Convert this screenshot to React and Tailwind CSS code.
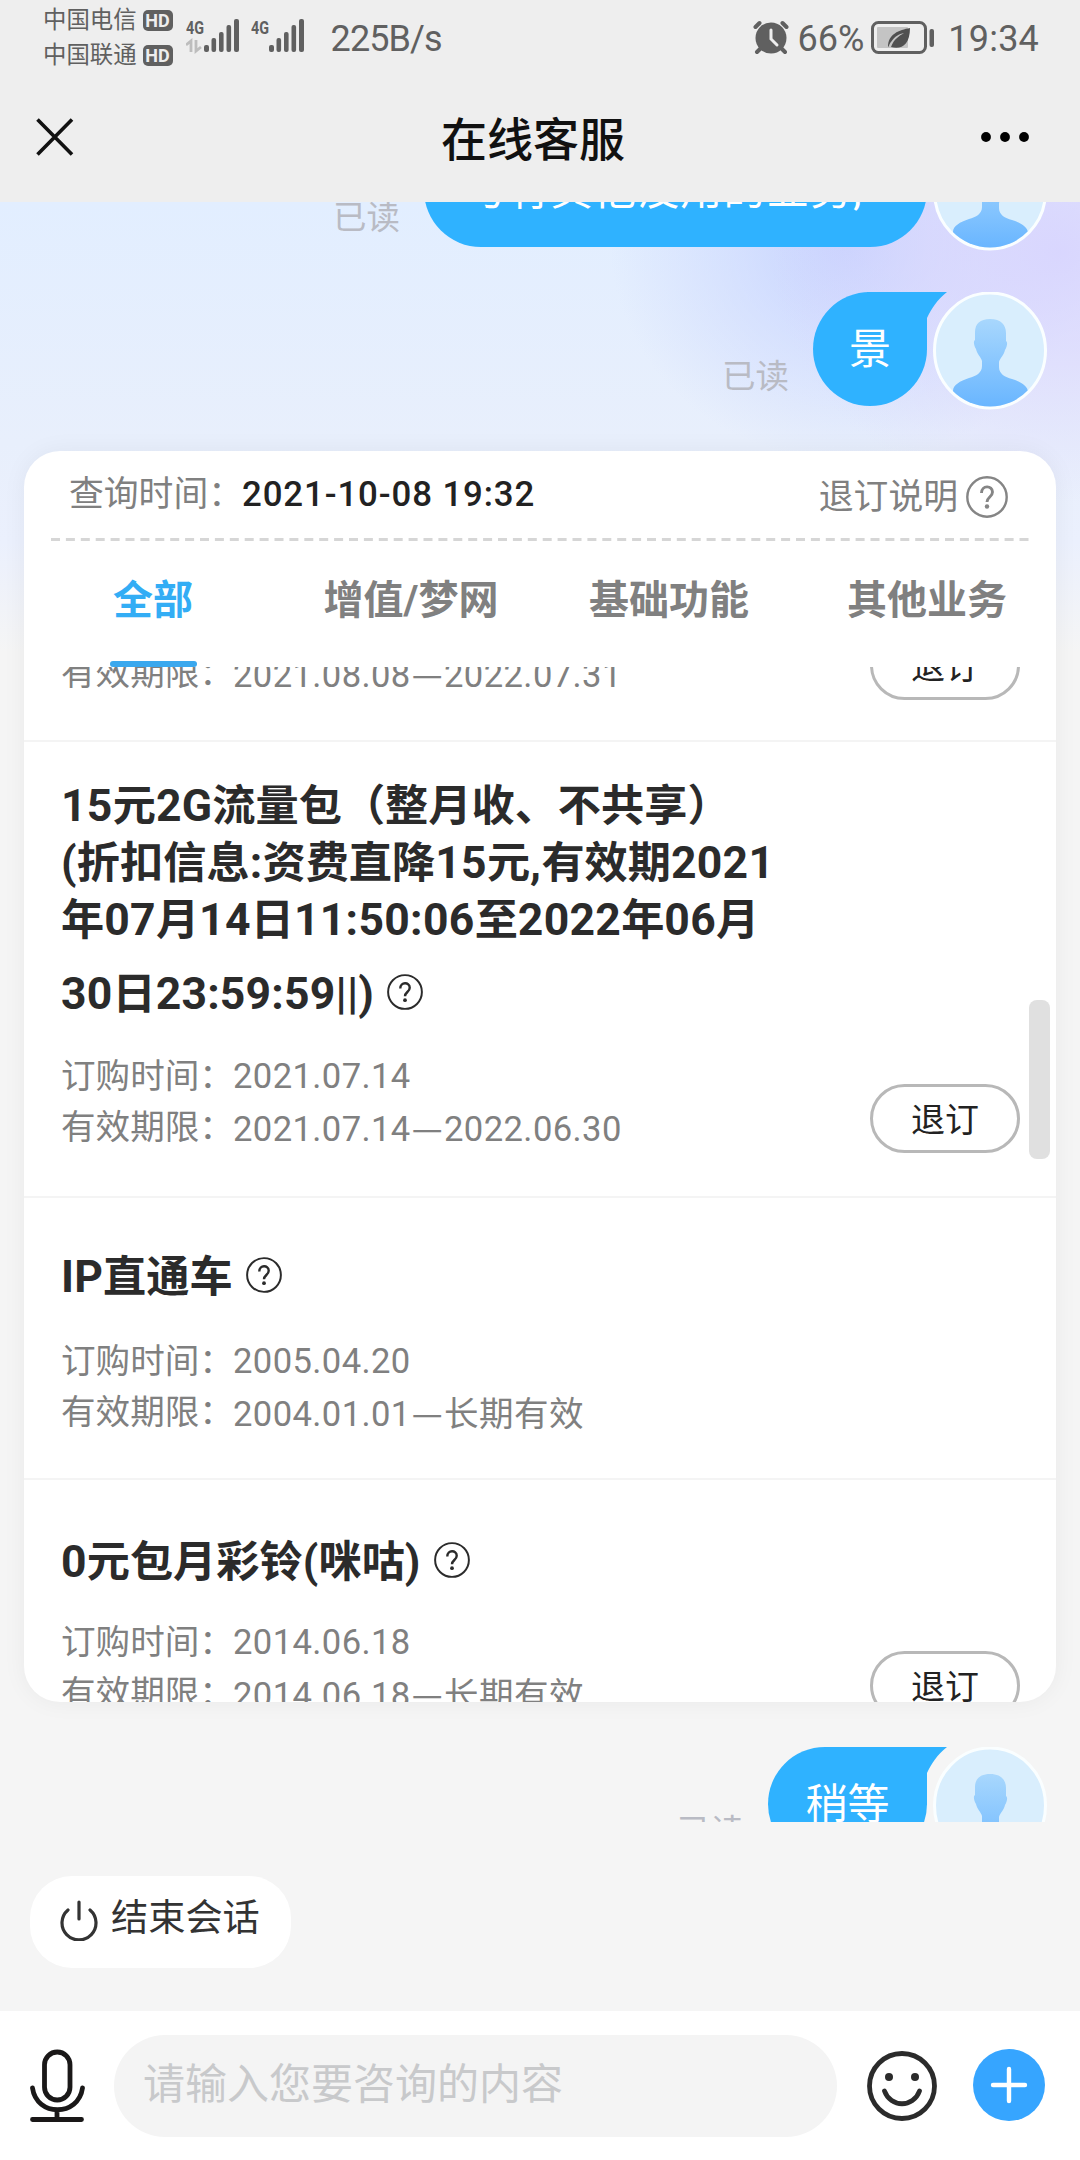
import React, { Fragment } from 'react'

const services = [
  {
    title: [],
    orderTime: null,
    period: '2021.08.08—2022.07.31',
    canCancel: true,
    box: 'h-[94px] pt-0',
    titleGap: '',
    button: 'mt-[-17px]',
  },
  {
    title: ['15元2G流量包（整月收、不共享）', '(折扣信息:资费直降15元,有效期2021', '年07月14日11:50:06至2022年06月'],
    lastLine: '30日23:59:59||)',
    orderTime: '2021.07.14',
    period: '2021.07.14—2022.06.30',
    canCancel: true,
    box: 'h-[456px] pt-[36px]',
    lastLineBox: 'h-[90px]',
    titleGap: 'mt-[12px]',
    button: 'mt-[306px]',
  },
  {
    title: [],
    lastLine: 'IP直通车',
    orderTime: '2005.04.20',
    period: '2004.01.01—长期有效',
    canCancel: false,
    box: 'h-[282px] pt-[50px]',
    lastLineBox: 'h-[58px]',
    titleGap: 'mt-[30px]',
  },
  {
    title: [],
    lastLine: '0元包月彩铃(咪咕)',
    orderTime: '2014.06.18',
    period: '2014.06.18—长期有效',
    canCancel: true,
    box: 'h-[300px] pt-[53px]',
    lastLineBox: 'h-[58px]',
    titleGap: 'mt-[26px]',
    button: 'mt-[118px]',
  },
]

const tabs = ['全部', '增值/梦网', '基础功能', '其他业务']

// Latin runs are set slightly larger and wider than the Chinese around them
function Mixed({ text, className }) {
  return text.split(/([\x21-\x7e]+)/).map((part, i) =>
    i % 2 ? (
      <span key={i} className={className}>
        {part}
      </span>
    ) : (
      <Fragment key={i}>{part}</Fragment>
    )
  )
}

function Signal({ data }) {
  return (
    <svg width="54" height="36" viewBox="0 0 54 36" fill="#606060">
      <text x="0" y="16" fontSize="19" fontWeight="700" textLength="18" lengthAdjust="spacingAndGlyphs" fontFamily="Roboto, sans-serif">
        4G
      </text>
      {data && (
        <g stroke="#bdbdbd" strokeWidth="2.8" fill="none">
          <path d="M0 27l5-4v11" />
          <path d="M10 22v11l5-4" />
        </g>
      )}
      <rect x="18" y="27" width="5" height="7" rx="2" />
      <rect x="25.5" y="20" width="4.6" height="14" rx="2" />
      <rect x="33" y="14" width="4.6" height="20" rx="2" />
      <rect x="40.5" y="7" width="4.6" height="27" rx="2" />
      <rect x="48" y="1" width="5" height="33" rx="2" />
    </svg>
  )
}

function Carrier({ name }) {
  return (
    <div className="flex h-[35px] items-center">
      <span className="text-[23.400px] leading-none text-[#606060]">{name}</span>
      <span className="ml-[6px] flex h-[21px] w-[30px] items-center justify-center rounded-[5px] bg-[#606060] text-[18px] leading-none font-bold text-[#eee]">
        HD
      </span>
    </div>
  )
}

function StatusBar() {
  return (
    <div className="flex h-[73px] items-start text-[#606060]">
      <div className="ml-[43px] pt-[3px]">
        <Carrier name="中国电信" />
        <Carrier name="中国联通" />
      </div>
      <div className="ml-[13px] flex gap-[11px] pt-[18px]">
        <Signal data />
        <Signal />
      </div>
      <span className="ml-[26px] pt-[17px] text-[36px] leading-[44px] tracking-[-0.9px]">225B/s</span>
      <div className="mr-[41px] ml-auto flex items-center pt-[16px]">
        <svg width="36" height="36" viewBox="0 0 36 36" className="mr-[9px] mb-[3px]">
          <g stroke="#606060" strokeWidth="4" strokeLinecap="round">
            <path d="M2.5 8l4-4M33.500 8l-4-4M8 29l-4 4M28 29l4 4" />
          </g>
          <circle cx="18" cy="19" r="15.500" fill="#606060" />
          <path d="M18 11v9l6 6" fill="none" stroke="#eee" strokeWidth="3" strokeLinecap="round" />
        </svg>
        <span className="pt-[1px] text-[36px] leading-[44px]">66%</span>
        <svg width="64" height="34" viewBox="0 0 64 34" className="mb-[2px] ml-[7px]">
          <rect x="1.500" y="1.500" width="53" height="30" rx="6" fill="none" stroke="#606060" strokeWidth="3" />
          <rect x="6" y="6" width="31" height="21" rx="1" fill="#c4c4c4" />
          <path d="M39 7c-11 2-22 6-22 19 1 0 1-3 3-5 4-6 8-8 13-9-5 3-10 6-13 14 10 3 19-2 19-19z" fill="#505050" />
          <rect x="58.500" y="8" width="4.500" height="18" rx="2" fill="#606060" />
        </svg>
        <span className="ml-[13px] pt-[1px] text-[36px] leading-[44px] tracking-[0.2px]">19:34</span>
      </div>
    </div>
  )
}

function NavBar() {
  return (
    <div className="flex h-[129px] items-center justify-between pr-[50px] pb-[1px] pl-[36px]">
      <svg width="38" height="38" viewBox="0 0 38 38" stroke="#111" strokeWidth="3.600" className="mr-[12px]">
        <path d="M1.500 1.500L36 36.500M36 1.500L1.500 36.500" />
      </svg>
      <h1 className="pt-[6px] text-[46px] leading-none font-medium text-[#111]">在线客服</h1>
      <svg width="50" height="12" viewBox="0 0 50 12">
        <circle cx="6" cy="6" r="4.900" />
        <circle cx="25" cy="6" r="4.900" />
        <circle cx="44" cy="6" r="4.900" />
      </svg>
    </div>
  )
}

function Avatar() {
  return (
    <svg width="114" height="118" viewBox="0 0 114 118" className="ml-[6px] shrink-0">
      <defs>
        <linearGradient id="person" x1="0" y1="0" x2="0" y2="1">
          <stop offset="0" stopColor="#a8d7fd" />
          <stop offset="1" stopColor="#66b4ff" />
        </linearGradient>
        <clipPath id="face">
          <ellipse cx="57" cy="58.500" rx="54" ry="56" />
        </clipPath>
      </defs>
      <ellipse cx="57" cy="58.500" rx="55.500" ry="57.500" fill="#d9eefd" stroke="#fafeff" strokeWidth="3" />
      <path
        clipPath="url(#face)"
        d="M57 27c11 0 16 6 16 14v8c2 1 1 6-1 9-1 5-5 8-6 12v5c0 7 6 10 13 12 9 3 16 7 16 13v19H20V99c0-6 7-10 16-13 7-2 13-5 13-12v-5c-1-4-5-7-6-12-2-3-3-8-1-9v-8c0-8 5-13 15-13z"
        fill="url(#person)"
      />
    </svg>
  )
}

function Message({ text, tail = true, className }) {
  return (
    <div className="flex h-[118px] items-start justify-end pr-[33px]">
      <span className="mt-[65px] mr-[24px] text-[33.500px] leading-[40px] text-[#b9bbc4]">已读</span>
      <div className={`relative flex h-[114px] items-center justify-center rounded-[57px] bg-[#2fb2ff] pt-[2px] text-[42px] leading-none text-white ${className}`}>
        {tail && (
          <svg width="80" height="58" viewBox="0 0 80 58" className="absolute top-0 right-[-20px]" fill="#2fb2ff">
            <path d="M0 0h80C70 8 65 16 60 26V58H0z" />
          </svg>
        )}
        <span className="relative">{text}</span>
      </div>
      <Avatar />
    </div>
  )
}

function HelpIcon({ size, color, stroke, className }) {
  return (
    <svg width={size} height={size} viewBox="0 0 42 42" fill="none" stroke={color} strokeWidth={stroke} className={className}>
      <circle cx="21" cy="21" r="19.700" />
      <path d="M15.500 17c0-8 11-8 11-1 0 5-5.500 5-5.500 10" strokeWidth={stroke + 0.5} />
      <circle cx="21" cy="30.500" r="2.200" fill={color} stroke="none" />
    </svg>
  )
}

function CancelButton({ className }) {
  return (
    <button className={`h-[69px] w-[150px] shrink-0 rounded-full border-[3px] border-[#b8b8b8] bg-white pt-[3px] text-[34px] leading-none text-[#222] ${className}`}>
      退订
    </button>
  )
}

function InfoRow({ label, value }) {
  const [start, end] = value.split('—')
  return (
    <div className="flex h-[51px] items-center text-[34.600px] leading-none whitespace-nowrap text-[#808080]">
      <span className="w-[172px]">{label}：</span>
      <span className="tracking-[0.400px]">
        {start}
        {end && <span className="px-[1px] font-['Noto_Sans_CJK_SC',sans-serif]">—</span>}
        {end}
      </span>
    </div>
  )
}

function ServiceItem({ item }) {
  return (
    <div className={`flex items-start justify-between border-b-2 border-[#f4f4f4] pr-[36px] pl-[37px] ${item.box}`}>
      <div>
        <h2 className="text-[43.200px] leading-[57px] font-bold whitespace-nowrap text-[#2b2b2b]">
          {item.title.map((line) => (
            <div key={line}>
              <Mixed text={line} className="text-[44.500px] tracking-[0.3px]" />
            </div>
          ))}
          {item.lastLine && (
            <div className={`flex items-center ${item.lastLineBox}`}>
              <span>
                <Mixed text={item.lastLine} className="text-[44.500px] tracking-[0.200px]" />
              </span>
              <HelpIcon size={36} color="#2b2b2b" stroke={2.3} className="mb-[4px] ml-[13px]" />
            </div>
          )}
        </h2>
        <div className={item.titleGap}>
          {item.orderTime && <InfoRow label="订购时间" value={item.orderTime} />}
          <InfoRow label="有效期限" value={item.period} />
        </div>
      </div>
      {item.canCancel && <CancelButton className={item.button} />}
    </div>
  )
}

function ServiceCard() {
  return (
    <div className="relative mx-[24px] mt-[41px] flex h-[1251px] shrink-0 flex-col overflow-hidden rounded-[36px] bg-white shadow-[0_0_24px_rgba(0,0,0,0.05)]">
      <div className="flex h-[87px] shrink-0 items-center justify-between pr-[48px] pl-[45px] text-[34.800px] leading-none whitespace-nowrap text-[#808080]">
        <div className="flex items-center">
          <span className="w-[173px]">查询时间：</span>
          <span className="font-medium tracking-[0.9px] text-[#222]">2021-10-08 19:32</span>
        </div>
        <div className="flex items-center pt-[5px]">
          退订说明
          <HelpIcon size={42} color="#858585" stroke={2.4} className="mb-[1px] ml-[8px]" />
        </div>
      </div>
      <svg width="978" height="3" className="ml-[27px] shrink-0">
        <path d="M0 1.500H978" stroke="#d6d6d6" strokeWidth="3" strokeDasharray="9 5.900" />
      </svg>
      <div className="z-10 grid h-[126px] shrink-0 grid-cols-4 text-[40px] leading-none font-bold text-[#808080]">
        {tabs.map((tab, i) => (
          <div key={tab} className={i === 0 ? 'flex flex-col items-center justify-between pt-[40px] text-[#33adf5]' : 'flex flex-col items-center pt-[40px]'}>
            {tab}
            {i === 0 && <div className="h-[6px] w-[87px] rounded-full bg-[#3aa8ee]" />}
          </div>
        ))}
      </div>
      <div className="min-h-0 flex-1 overflow-hidden">
        <div className="mt-[-19px]">
          {services.map((item) => (
            <ServiceItem key={item.period} item={item} />
          ))}
        </div>
      </div>
      <div className="absolute top-[549px] right-[6px] h-[159px] w-[21px] rounded-[8px] bg-[#e0e0e0]" />
    </div>
  )
}

function InputBar() {
  return (
    <div className="flex h-[149px] items-start bg-white pt-[24px] pl-[30px]">
      <svg width="55" height="74" viewBox="0 0 55 74" fill="none" stroke="#1a1818" strokeWidth="4.800" strokeLinecap="round" className="mt-[14px]">
        <rect x="14.500" y="3" width="25.500" height="48" rx="12.750" />
        <path d="M2.500 39c4 29 46 29 50 0M27 61v9M2.500 70.500h49" />
      </svg>
      <div className="ml-[29px] flex h-[102px] w-[723px] items-center rounded-full bg-[#f4f4f4] pb-[2px] pl-[29px] text-[42px] leading-none text-[#c8c9cb]">
        请输入您要咨询的内容
      </div>
      <svg width="70" height="70" viewBox="0 0 70 70" fill="none" stroke="#2b2b2b" strokeWidth="4.800" strokeLinecap="round" className="mt-[16px] ml-[30px]">
        <circle cx="35" cy="35" r="32.500" />
        <path d="M17.500 40c6 17 29 17 35 0" />
        <circle cx="22" cy="26" r="4" fill="#2b2b2b" stroke="none" />
        <circle cx="48" cy="26" r="4" fill="#2b2b2b" stroke="none" />
      </svg>
      <svg width="72" height="72" viewBox="0 0 72 72" className="mt-[14px] ml-[36px]">
        <circle cx="36" cy="36" r="36" fill="#36a5ff" />
        <path d="M36 20v32M20 36h32" stroke="#fff" strokeWidth="4.400" strokeLinecap="round" />
      </svg>
    </div>
  )
}

export default function App() {
  return (
    <div className="flex h-[2160px] w-[1080px] flex-col overflow-hidden bg-[#f5f5f5] font-[Roboto,'Noto_Sans_CJK_SC',sans-serif]">
      <div className="h-[202px] shrink-0 bg-[#eee]">
        <StatusBar />
        <NavBar />
      </div>
      <div className="flex h-[1620px] shrink-0 flex-col overflow-hidden bg-[radial-gradient(ellipse_290px_250px_at_1060px_50px,rgba(216,212,254,0.9)_0%,rgba(220,214,253,0.6)_45%,rgba(220,212,253,0)_100%),radial-gradient(ellipse_240px_220px_at_850px_40px,#c6d2fe_0%,rgba(200,212,255,0.55)_45%,rgba(200,212,255,0)_100%),linear-gradient(180deg,#e2eeff_0px,#e8effc_240px,#ebf0fd_340px,#f5f5f5_450px)]">
        <div className="mt-[-69px] shrink-0">
          <Message text="与有其他没用的业务," tail={false} className="w-[503px] pr-[24px] tracking-[1.2px]" />
        </div>
        <div className="mt-[41px] shrink-0">
          <Message text="景" className="w-[114px]" />
        </div>
        <ServiceCard />
        <div className="mt-[45px] shrink-0">
          <Message text="稍等" className="w-[159px]" />
        </div>
      </div>
      <div className="h-[189px] shrink-0 pt-[54px] pl-[30px]">
        <button className="flex h-[92px] w-[261px] items-center rounded-[42px] bg-white pb-[6px] pl-[29px] text-[37.200px] leading-none text-[#333]">
          <svg width="40" height="42" viewBox="0 0 40 42" fill="none" stroke="#333" strokeWidth="3.200" strokeLinecap="round" className="mt-[2px] mr-[12px]">
            <path d="M20 3v17M9 11a17 17 0 1 0 22 0" />
          </svg>
          结束会话
        </button>
      </div>
      <InputBar />
    </div>
  )
}
